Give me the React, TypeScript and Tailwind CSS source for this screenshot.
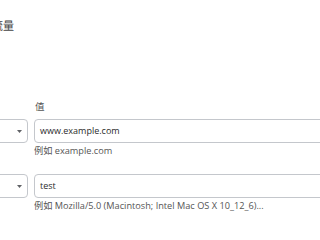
import React from "react"

const font = { fontFamily: '"Open Sans", "Noto Sans CJK SC", sans-serif' }

function Caret() {
  return (
    <svg width="5" height="3" viewBox="0 0 5 3" className="shrink-0">
      <path d="M0 0 L5 0 L2.5 3 Z" fill="#606266" />
    </svg>
  )
}

function Row({ value, hint }: { value: string; hint: string }) {
  return (
    <div className="flex gap-[6px]">
      <div className="ml-[-72px] flex h-[24px] w-[100px] shrink-0 items-center justify-end rounded-[4px] border border-[#c4c7cc] pr-[5px]">
        <Caret />
      </div>
      <div className="flex w-[400px] shrink-0 flex-col">
        <div className="flex h-[24px] items-center rounded-[4px] border border-[#c4c7cc] px-[5px] text-[9px] text-[#2b2b2b]">
          {value}
        </div>
        <div className="mt-[1px] whitespace-nowrap text-[9.2px] leading-[13px] text-[#555]">{hint}</div>
      </div>
    </div>
  )
}

export default function App() {
  return (
    <div className="h-[214px] w-[320px] overflow-hidden bg-white" style={font}>
      <div className="ml-[-8px] pt-[19px] text-[11px] leading-[14px] text-[#444]">流量</div>
      <div className="ml-[35px] mt-[67px] text-[9.5px] leading-[14px] text-[#555]">值</div>
      <div className="mt-[5px] flex flex-col gap-[17px]">
        <Row value="www.example.com" hint="例如 example.com" />
        <Row value="test" hint="例如 Mozilla/5.0 (Macintosh; Intel Mac OS X 10_12_6)..." />
      </div>
    </div>
  )
}
